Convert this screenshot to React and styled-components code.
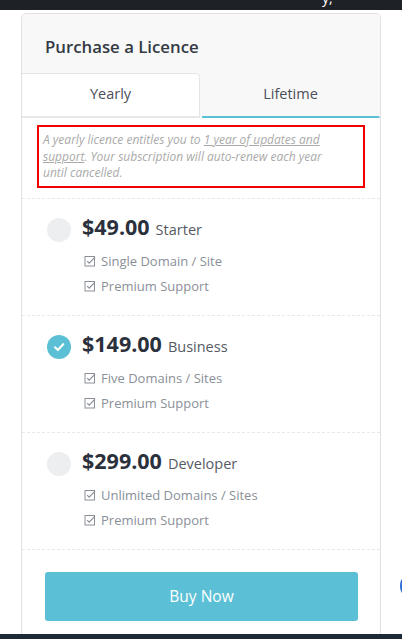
import React, { useState } from "react";
import styled, { createGlobalStyle } from "styled-components";

const GlobalStyle = createGlobalStyle`
  body {
    margin: 0;
    background: #ffffff;
    font-family: "Open Sans", "Lato", sans-serif;
    overflow: hidden;
  }
`;

const TopBar = styled.div`
  height: 10px;
  background: #1e2226;
  overflow: hidden;
  position: relative;
  & span {
    position: absolute;
    left: 322px;
    top: -11px;
    color: #fff;
    font-size: 14px;
    line-height: 18px;
  }
`;

const Page = styled.div`
  padding: 3px 21px 0 21px;
  height: 640px;
`;

const Card = styled.div`
  width: 358px;
  height: 700px;
  border: 1px solid #e1e1e1;
  border-radius: 5px;
  overflow: hidden;
  background: #fff;
`;

const Header = styled.div`
  background: #f8f8f8;
  padding-top: 21px;
`;

const Title = styled.h2`
  margin: 0 0 14px 23px;
  font-size: 16.8px;
  line-height: 24px;
  font-weight: 600;
  color: #333a44;
`;

const Tabs = styled.div`
  display: flex;
  height: 45px;
`;

const Tab = styled.button`
  flex: 1;
  border: none;
  font: inherit;
  font-size: 14.5px;
  color: #4a4f58;
  cursor: pointer;
  background: ${(p) => (p.$active ? "#fff" : "transparent")};
  border-top: 1px solid ${(p) => (p.$active ? "#e5e5e5" : "transparent")};
  border-right: 1px solid ${(p) => (p.$active ? "#e5e5e5" : "transparent")};
  border-top-right-radius: ${(p) => (p.$active ? "5px" : "0")};
  border-bottom: 2px solid ${(p) => (p.$active ? "#e8e8e8" : "#5bc0d5")};
  margin-right: ${(p) => (p.$active ? "2px" : "0")};
  padding: 0 0 3px 0;
`;

const Notice = styled.p`
  margin: 7px 15px 0 15px;
  border: 2px solid #f20000;
  padding: 5px 20px 4px 4px;
  font-size: 12px;
  line-height: 16.5px;
  font-style: italic;
  color: #aaaaaa;
  & u {
    text-decoration: underline;
  }
`;

const Plans = styled.div`
  margin-top: 10px;
  border-top: 1px dashed #e8e8e8;
`;

const Plan = styled.label`
  display: flex;
  gap: 11px;
  padding: 15px 20px 16px 25px;
  border-bottom: 1px dashed #e8e8e8;
  cursor: pointer;
`;

const Radio = styled.span`
  flex: none;
  width: 24px;
  height: 24px;
  margin-top: 4px;
  border-radius: 50%;
  background: ${(p) => (p.$checked ? "#5bc0d5" : "#eceef0")};
  display: flex;
  align-items: center;
  justify-content: center;
`;

const PlanBody = styled.div`
  display: flex;
  flex-direction: column;
`;

const PriceLine = styled.div`
  display: flex;
  align-items: baseline;
  gap: 6px;
  height: 26px;
  line-height: 26px;
`;

const Price = styled.span`
  font-size: 21.5px;
  font-weight: 700;
  color: #2b313c;
`;

const Tier = styled.span`
  font-size: 14.5px;
  color: #555a63;
`;

const Features = styled.ul`
  list-style: none;
  margin: 9px 0 0 2px;
  padding: 0;
`;

const Feature = styled.li`
  display: flex;
  align-items: center;
  gap: 5px;
  height: 25px;
  font-size: 13px;
  color: #8a8f98;
`;

const Footer = styled.div`
  padding: 22px 23px;
`;

const BuyButton = styled.button`
  width: 313px;
  height: 49px;
  border: none;
  border-radius: 3px;
  background: #5bc0d5;
  color: #fff;
  font: inherit;
  font-size: 15.5px;
  cursor: pointer;
`;

const BottomBar = styled.div`
  position: fixed;
  left: 0;
  right: 0;
  bottom: 0;
  height: 5px;
  background: #1b2a36;
`;

const EdgeBadge = styled.div`
  position: fixed;
  left: 400px;
  top: 572px;
  width: 28px;
  height: 28px;
  border-radius: 50%;
  background: #2f6fd6;
`;

const CheckBox = () => (
  <svg width="12" height="12" viewBox="0 0 12 12" fill="none">
    <rect x="1" y="1.5" width="9.5" height="9.5" stroke="#8a8f98" strokeWidth="1" />
    <path d="M3.2 6.2 L5.2 8.2 L11 2.2" stroke="#8a8f98" strokeWidth="1.2" />
  </svg>
);

const Tick = () => (
  <svg width="14" height="14" viewBox="0 0 14 14" fill="none">
    <path d="M3 7.3 L5.9 10 L11.2 4.2" stroke="#fff" strokeWidth="2.2" strokeLinecap="round" strokeLinejoin="round" />
  </svg>
);

const plans = [
  { price: "$49.00", tier: "Starter", features: ["Single Domain / Site", "Premium Support"] },
  { price: "$149.00", tier: "Business", features: ["Five Domains / Sites", "Premium Support"] },
  { price: "$299.00", tier: "Developer", features: ["Unlimited Domains / Sites", "Premium Support"] },
];

function App() {
  const [tab, setTab] = useState("yearly");
  const [selected, setSelected] = useState(1);

  return (
    <>
      <GlobalStyle />
      <TopBar>
        <span>y,</span>
      </TopBar>
      <Page>
        <Card>
          <Header>
            <Title>Purchase a Licence</Title>
            <Tabs>
              <Tab $active={tab === "yearly"} onClick={() => setTab("yearly")}>
                Yearly
              </Tab>
              <Tab $active={tab === "lifetime"} onClick={() => setTab("lifetime")}>
                Lifetime
              </Tab>
            </Tabs>
          </Header>
          <Notice>
            A yearly licence entitles you to <u>1 year of updates and support</u>. Your
            subscription will auto-renew each year until cancelled.
          </Notice>
          <Plans>
            {plans.map((plan, i) => (
              <Plan key={plan.tier} onClick={() => setSelected(i)}>
                <Radio $checked={selected === i}>{selected === i && <Tick />}</Radio>
                <PlanBody>
                  <PriceLine>
                    <Price>{plan.price}</Price>
                    <Tier>{plan.tier}</Tier>
                  </PriceLine>
                  <Features>
                    {plan.features.map((f) => (
                      <Feature key={f}>
                        <CheckBox />
                        {f}
                      </Feature>
                    ))}
                  </Features>
                </PlanBody>
              </Plan>
            ))}
          </Plans>
          <Footer>
            <BuyButton>Buy Now</BuyButton>
          </Footer>
        </Card>
      </Page>
      <EdgeBadge />
      <BottomBar />
    </>
  );
}

export default App;
